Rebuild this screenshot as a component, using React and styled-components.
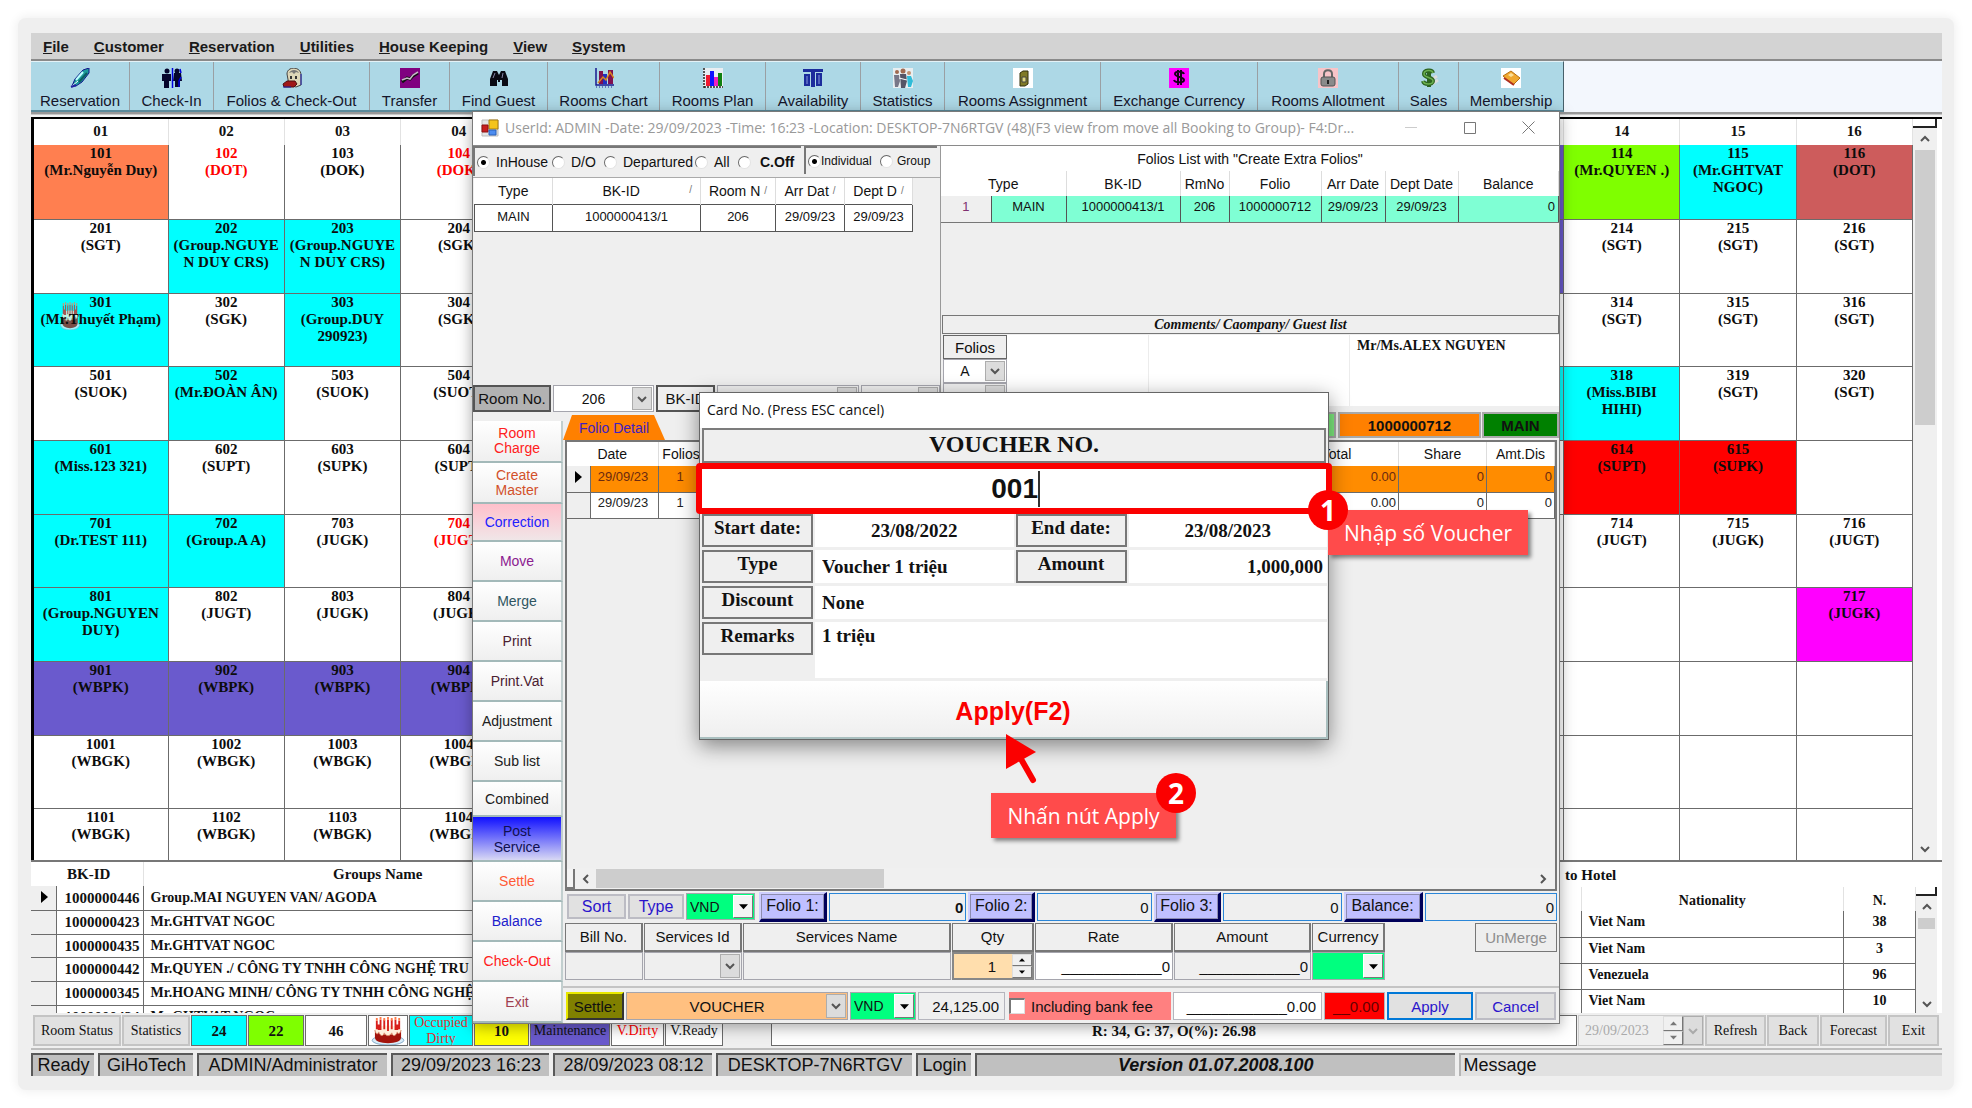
import React from "react";
import styled, { createGlobalStyle, css } from "styled-components";

const SANS = '"Liberation Sans", Arial, sans-serif';
const SERIF = '"Liberation Serif", "Times New Roman", serif';
const UI = '"Open Sans", "Noto Sans", sans-serif';
const LINE = "#6b6b6b";
const FACE = "#efefef";

const GlobalStyle = createGlobalStyle`
  *, *::before, *::after { box-sizing: border-box; }
  body { margin: 0; background: #fff; font-family: ${SANS}; color: #111; }
  button, input, select { font: inherit; color: inherit; margin: 0; border-radius: 0; }
  table { border-collapse: collapse; border-spacing: 0; }
`;

/* ---------- page shell ---------- */

const Page = styled.div`
  padding: 18px;
  min-width: 1400px;
`;

const Frame = styled.div`
  padding: 15px 12px 14px 13px;
  background: ${FACE};
  border-radius: 8px;
  box-shadow: 0 0 10px 2px #f1f1f1;
`;

const Desk = styled.div`
  position: relative;
  overflow: hidden;
`;

/* ---------- menu and toolbar ---------- */

const MenuBar = styled.nav`
  display: flex;
  gap: 25px;
  align-items: center;
  height: 28px;
  padding-left: 12px;
  background: #d3d3d3;
  border-bottom: 2px solid #8a8a8a;
  font-weight: bold;
  font-size: 15px;
`;

const MenuLink = styled.a`
  color: #1a1a1a;
  text-decoration: none;
`;

const ToolStrip = styled.div`
  display: flex;
  height: 51px;
  background: #f3f7fd;
`;

const Tools = styled.div`
  display: flex;
  border-top: 1px solid #e4f2f7;
  border-bottom: 2px solid #5b8b9c;
  border-right: 1px solid #47606a;
`;

const Tool = styled.button`
  display: flex;
  flex-direction: column;
  align-items: center;
  gap: 3px;
  width: ${(p) => p.$w}px;
  padding: 6px 0 0;
  border: 0;
  border-right: 1px solid #9a9fa3;
  background: #add8e6;
  color: #15152a;
  font-size: 15px;
  line-height: 20px;
  white-space: nowrap;
  svg { display: block; width: 20px; height: 20px; flex: none; }
  &:last-child { border-right: 0; }
`;

const Rail = styled.div`
  height: 5px;
  background: #c9c9c9;
  border-bottom: 2px solid #f4f4f4;
  border-top: 2px solid #999;
`;

/* ---------- room plan ---------- */

const Plan = styled.div`
  display: flex;
  padding-right: 5px;
  border-top: 2px solid #000;
  border-left: 3px solid #000;
  background: #fff;
`;

const PlanTable = styled.table`
  flex: 1;
  min-width: 0;
  width: 100%;
  table-layout: fixed;
  font: bold 15px/17px ${SERIF};
`;

const PlanHead = styled.th`
  height: 26px;
  padding: 0 0 1px;
  border-right: 1px solid #e2e2e2;
`;

const PlanRow = styled.tr`
  height: 74px;
  &:nth-child(3n) { height: 73px; }
  &:last-child { height: 52px; }
`;

const Room = styled.td`
  padding: 0;
  vertical-align: top;
  text-align: center;
  white-space: pre;
  overflow: hidden;
  border-right: 1px solid ${LINE};
  border-bottom: 1px solid ${LINE};
  background: ${(p) => p.$bg || "#fff"};
  color: ${(p) => p.$fg || "#0c0c0c"};
  tr:last-child > & { border-bottom: 0; }
`;

const RoomBox = styled.div`
  position: relative;
  z-index: 0;
  svg { position: absolute; z-index: -1; left: 26px; top: 8px; width: 20px; height: 28px; opacity: 0.75; }
`;

const VScroll = styled.div`
  display: flex;
  flex-direction: column;
  flex: none;
  width: ${(p) => p.$w}px;
  background: #f0f0f0;
`;

const SplitGrip = styled.div`
  height: 9px;
  background: #fff;
  border-right: 2px solid #222;
  border-bottom: 2px solid #222;
`;

const ArrowButton = styled.button`
  display: flex;
  align-items: center;
  justify-content: center;
  flex: none;
  width: ${(p) => (p.$w ? p.$w + "px" : "auto")};
  height: ${(p) => p.$h || 20}px;
  padding: 0;
  border: 0;
  background: transparent;
`;

const Thumb = styled.div`
  height: ${(p) => p.$size}px;
  margin: 0 2px auto;
  background: #cdcdcd;
`;

/* ---------- lists under the plan ---------- */

const Lists = styled.div`
  display: flex;
  justify-content: space-between;
  height: 153px;
  overflow: hidden;
  border-top: 2px solid #777;
  background: #fff;
  font: bold 15px/17px ${SERIF};
`;

const GroupTable = styled.table`
  width: 578px;
  height: max-content;
  table-layout: fixed;
  th { height: 24px; padding: 0; border-right: 1px solid #e2e2e2; }
  thead th { padding: 0 0 0 4px; }
  tbody tr { height: 24px; }
  tbody tr:nth-child(3n) { height: 23px; }
  td {
    padding: 0 3px;
    overflow: hidden;
    white-space: nowrap;
    line-height: 16px;
    border-right: 1px solid ${LINE};
    border-bottom: 1px solid ${LINE};
  }
  td:first-child { background: ${FACE}; padding: 0 10px; }
  td:last-child { padding-left: 7px; font-size: 14px; }
`;

const Hotel = styled.section`
  flex: none;
  width: 382px;
  padding-right: 5px;
`;

const HotelTitle = styled.div`
  height: 25px;
  padding: 5px 0 0 5px;
`;

const HotelBody = styled.div`
  display: flex;
`;

const HotelTable = styled.table`
  flex: 1;
  table-layout: fixed;
  font-size: 14px;
  th { height: 24px; padding: 2px 0 0; border-right: 1px solid #e2e2e2; }
  tbody tr { height: 26px; }
  td {
    padding: 0 0 4px 7px;
    border-right: 1px solid ${LINE};
    border-bottom: 1px solid ${LINE};
  }
  td:last-child { text-align: center; padding-left: 0; }
`;

/* ---------- legend and status bar ---------- */

const Legend = styled.div`
  display: flex;
  align-items: stretch;
  gap: 1px;
  height: 33px;
  padding: 2px 3px 0 2px;
  background: ${FACE};
  font: 14px/16px ${SERIF};
`;

const FlatButton = styled.button`
  width: ${(p) => p.$w}px;
  padding: 0;
  border: 2px solid #c4c4c4;
  background: #e1e1e1;
`;

const Key = styled.div`
  display: flex;
  align-items: center;
  justify-content: center;
  width: ${(p) => p.$w}px;
  overflow: hidden;
  text-align: center;
  background: ${(p) => p.$bg || "#fff"};
  color: ${(p) => p.$fg || "#111"};
  font-weight: ${(p) => (p.$bold ? "bold" : "normal")};
  font-size: ${(p) => (p.$bold ? 15 : 14)}px;
  border: 1px solid ${LINE};
`;

const Ratio = styled.div`
  display: flex;
  align-items: center;
  justify-content: center;
  flex: 1;
  margin-left: 47px;
  background: #fff;
  border: 1px solid ${LINE};
  font-weight: bold;
  font-size: 15px;
`;

const DateBox = styled.div`
  display: flex;
  width: 126px;
  border: 1px solid #ccc;
  input { flex: 1; min-width: 0; border: 0; padding: 0 0 0 6px; background: transparent; color: #aaa; }
`;

const StatusBar = styled.footer`
  display: flex;
  gap: 4px;
  margin-top: 2px;
  padding-top: 3px;
  border-top: 2px solid #bdbdbd;
  background: ${FACE};
  font-size: 18px;
  line-height: 21px;
  white-space: nowrap;
`;

const StatusCell = styled.div`
  width: ${(p) => p.$w}px;
  flex: ${(p) => (p.$grow ? `${p.$grow} 1 0` : "none")};
  text-align: ${(p) => (p.$left ? "left" : "center")};
  padding-left: ${(p) => (p.$left ? 3 : 0)}px;
  background: ${(p) => (p.$left ? "#e1e1e1" : "#c0c0c0")};
  border-top: 2px solid ${(p) => (p.$left ? "#b5b5b5" : "#5a5a5a")};
  border-left: 2px solid ${(p) => (p.$left ? "#b5b5b5" : "#5a5a5a")};
  font-weight: ${(p) => (p.$version ? "bold" : "normal")};
  font-style: ${(p) => (p.$version ? "italic" : "normal")};
`;

/* ---------- folio window ---------- */

const FolioWindow = styled.section`
  position: absolute;
  left: 441px;
  right: 382px;
  top: 78px;
  background: ${FACE};
  border: 1px solid #7a7a7a;
  box-shadow: 0 3px 14px rgba(0, 0, 0, 0.35);
`;

const TitleBar = styled.header`
  display: flex;
  align-items: center;
  height: 34px;
  padding: 0 1px 2px 8px;
  background: #fff;
  border-bottom: 1px solid #8a8a8a;
  color: #999;
  font: 14px/20px ${UI};
  white-space: nowrap;
  svg { flex: none; }
`;

const TitleText = styled.div`
  flex: 1;
  min-width: 0;
  overflow: hidden;
  padding-left: 6px;
`;

const WindowButton = styled.button`
  display: flex;
  align-items: center;
  justify-content: center;
  width: 59px;
  height: 28px;
  padding: 0;
  border: 0;
  background: transparent;
`;

const Upper = styled.div`
  display: flex;
  height: 266px;
`;

const BookingPane = styled.div`
  display: flex;
  flex-direction: column;
  width: 467px;
  font-size: 14px;
`;

const Filters = styled.div`
  display: flex;
  gap: 3px;
  height: 32px;
  border-bottom: 1px solid #aaa;
`;

const FilterGroup = styled.fieldset`
  display: flex;
  align-items: center;
  width: ${(p) => p.$w}px;
  height: ${(p) => p.$h}px;
  margin: 0;
  padding: 0 0 0 2px;
  min-width: 0;
  border: 0;
  border-top: 2px solid #777;
  border-left: 2px solid #777;
  font-size: ${(p) => p.$size}px;
`;

const RadioLabel = styled.label`
  display: flex;
  align-items: center;
  gap: ${(p) => p.$gap}px;
  width: ${(p) => p.$w}px;
  white-space: nowrap;
  font-weight: ${(p) => (p.$bold ? "bold" : "normal")};
  input {
    appearance: none;
    flex: none;
    width: 13px;
    height: 13px;
    background: #fff;
    border: 1px solid #e3e3e3;
    border-top-color: #666;
    border-left-color: #666;
    border-radius: 50%;
  }
  input:checked { background: radial-gradient(circle, #000 2px, #fff 3px); }
`;

const BookingTable = styled.table`
  width: 439px;
  table-layout: fixed;
  margin-left: 1px;
  font-size: 13px;
  text-align: center;
  background: #fff;
  th { height: 26px; padding: 0; font-weight: normal; font-size: 14px; border-right: 1px solid #ddd; white-space: nowrap; }
  td { height: 27px; padding: 0 0 2px; border: 1px solid #555; white-space: nowrap; }
`;

const SortMark = styled.span`
  float: ${(p) => (p.$edge ? "right" : "none")};
  margin: ${(p) => (p.$edge ? "1px 8px 0 0" : "0 0 0 4px")};
  color: #777;
  font-size: 10px;
  vertical-align: 2px;
`;

const RoomLine = styled.div`
  display: flex;
  gap: 2px;
  height: 27px;
  margin-top: auto;
`;

const RoomButton = styled.button`
  width: ${(p) => p.$w}px;
  padding: 0;
  border: 2px solid #555;
  background: ${(p) => p.$bg};
  font-size: 15px;
  white-space: nowrap;
`;

const ComboBox = styled.span`
  display: flex;
  align-items: stretch;
  width: ${(p) => (p.$w ? p.$w + "px" : "auto")};
  height: ${(p) => (p.$h ? p.$h + "px" : "auto")};
  flex: ${(p) => (p.$w ? "none" : "1")};
  padding: 1px;
  background: ${(p) => p.$bg || "#fff"};
  border: 1px solid #a5a5ad;
  select {
    appearance: none;
    flex: 1;
    min-width: 0;
    padding: 0 2px;
    border: 0;
    outline: 0;
    background: transparent;
    font-size: ${(p) => (p.$left ? "14px" : "inherit")};
    text-align: ${(p) => (p.$left ? "left" : "center")};
    text-align-last: ${(p) => (p.$left ? "left" : "center")};
  }
`;

const ComboArrow = styled.span`
  display: flex;
  align-items: center;
  justify-content: center;
  flex: none;
  width: 20px;
  background: ${(p) => (p.$classic ? "#f4f4f4" : "#dcdcdc")};
  border: 1px solid ${(p) => (p.$classic ? "#fff" : "#adadad")};
  ${(p) => p.$classic && css`border-right-color: #777; border-bottom-color: #777;`}
`;

const FolioPane = styled.div`
  flex: 1;
  min-width: 0;
  display: flex;
  flex-direction: column;
  border-left: 1px solid #999;
  font-size: 14px;
`;

const ExtraCaption = styled.div`
  height: 25px;
  background: #fff;
  text-align: center;
  line-height: 26px;
`;

const ExtraTable = styled.table`
  width: 100%;
  table-layout: fixed;
  font-size: 13px;
  text-align: center;
  th { height: 25px; padding: 0; font-weight: normal; font-size: 14px; background: #fff; border-right: 1px solid #ddd; white-space: nowrap; }
  td { height: 26px; padding: 0 0 4px; background: #7fffd4; border-right: 1px solid #555; border-bottom: 1px solid #777; white-space: nowrap; }
  td:first-child { background: ${FACE}; color: #803070; }
  td:last-child { text-align: right; padding-right: 3px; }
`;

const CommentsBar = styled.div`
  height: 19px;
  margin: auto 0 0 1px;
  border: 1px solid #777;
  text-align: center;
  font: italic bold 14px/17px ${SERIF};
`;

const CommentsArea = styled.div`
  display: flex;
  height: 78px;
  padding: 1px 0 0 2px;
`;

const FolioPick = styled.div`
  display: flex;
  flex-direction: column;
  width: 64px;
`;

const FolioButton = styled.button`
  height: 24px;
  padding: 0;
  border: 1px solid #666;
  background: ${FACE};
  font-size: 15px;
`;

const GuestList = styled.div`
  display: grid;
  grid-template-columns: 141px 201px 1fr;
  flex: 1;
  height: 71px;
  background: #fff;
  font: bold 14px/17px ${SERIF};
  div { padding: 2px 7px; border-left: 1px solid #ececec; white-space: nowrap; }
  div:first-child { border-left: 0; }
`;

const Lower = styled.div`
  display: flex;
`;

const SideBar = styled.div`
  display: flex;
  flex-direction: column;
  width: 90px;
  padding-top: 9px;
`;

const SideButton = styled.button`
  height: ${(p) => p.$h}px;
  padding: 0 8px;
  border: 0;
  border-bottom: 2px solid #a3b9b9;
  border-right: 2px solid #c2cfcf;
  background: ${(p) => p.$bg || "linear-gradient(#fff, #efefef)"};
  color: ${(p) => p.$fg || "#202020"};
  font-size: 14px;
  line-height: ${(p) => p.$lh || 16}px;
`;

const Work = styled.div`
  display: flex;
  flex-direction: column;
  flex: 1;
  min-width: 0;
`;

const TabLine = styled.div`
  display: flex;
  height: 28px;
  gap: 1px;
`;

const Tab = styled.button`
  width: 102px;
  margin: 3px auto 0 0;
  padding: 0;
  border: 0;
  background: #ff8000;
  clip-path: polygon(9px 0, 91px 0, 100% 100%, 0 100%);
  color: #4020c0;
  font-size: 14px;
`;

const FolioTag = styled.div`
  width: ${(p) => p.$w}px;
  height: 26px;
  border: 2px solid #a9a9a9;
  background: ${(p) => p.$bg};
  text-align: center;
  font-weight: bold;
  font-size: 15px;
  line-height: 24px;
`;

const LedgerBox = styled.div`
  display: flex;
  flex-direction: column;
  flex: 1;
  margin: 0 2px 0 2px;
  border: 2px solid #777;
  overflow: hidden;
`;

const Ledger = styled.table`
  width: 100%;
  table-layout: fixed;
  font-size: 13px;
  th { height: 24px; padding: 0; background: #fff; font-weight: normal; font-size: 14px; border-right: 1px solid #ddd; }
  td { height: 26px; padding: 0 2px 5px 0; text-align: right; border-right: 1px solid ${LINE}; border-bottom: 1px solid ${LINE}; }
  td:nth-child(2), td:nth-child(3) { text-align: center; }
  td:first-child { background: ${FACE}; text-align: center; padding: 0; }
`;

const LedgerRow = styled.tr`
  background: ${(p) => (p.$active ? "#ff8c00" : "#fff")};
  color: ${(p) => (p.$active ? "#6b2a10" : "#222")};
`;

const HScroll = styled.div`
  display: flex;
  align-items: center;
  height: 21px;
  margin-top: auto;
  background: #f0f0f0;
`;

const HGrip = styled.div`
  width: 8px;
  height: 20px;
  background: #f4f4f4;
  border-right: 2px solid #777;
  border-bottom: 2px solid #777;
`;

const HThumb = styled.div`
  width: 288px;
  height: 19px;
  margin-right: auto;
  background: #cdcdcd;
`;

const SumLine = styled.div`
  display: flex;
  align-items: center;
  gap: 2px;
  height: 31px;
  padding: 0 2px 0 4px;
  font-size: 16px;
`;

const SmallButton = styled.button`
  width: ${(p) => p.$w}px;
  height: ${(p) => p.$h || 25}px;
  padding: 0;
  border: ${(p) => (p.$primary ? "2px solid #0078d7" : "2px solid #bcbcc4")};
  background: #e1e1e1;
  color: #2a14cc;
  font-size: ${(p) => p.$size || 16}px;
`;

const SumLabel = styled.label`
  display: flex;
  align-items: center;
  justify-content: center;
  flex: none;
  width: ${(p) => p.$w}px;
  height: 30px;
  border: 2px solid #cfcfff;
  border-right: 3px solid #00005a;
  border-bottom: 3px solid #00005a;
  background: #c0c0ff;
  box-shadow: inset 0 0 0 1px #8d8db0;
`;

const SumInput = styled.input`
  flex: ${(p) => p.$grow} 1 0;
  min-width: 0;
  height: 28px;
  padding: 2px 2px 0 0;
  border: 1px solid #2a86d8;
  background: ${FACE};
  text-align: right;
  font-weight: ${(p) => (p.$bold ? "bold" : "normal")};
  font-size: 15px;
`;

const EntryGrid = styled.div`
  display: grid;
  grid-template-columns: 78px 98px 208px 82px 138px 137px 73px 1fr 82px;
  grid-template-rows: 29px 28px;
  column-gap: 1px;
  padding: 1px 2px 0 2px;
  font-size: 15px;
`;

const EntryHead = styled.div`
  border: 2px solid #777;
  border-left-width: 1px;
  border-top-width: 1px;
  text-align: center;
  line-height: 26px;
  white-space: nowrap;
`;

const EntryInput = styled.input`
  width: 100%;
  min-width: 0;
  padding: 0 2px 0 0;
  border: 1px solid #a5a5ad;
  background: ${(p) => p.$bg || "transparent"};
  text-align: right;
`;

const QtyBox = styled.div`
  display: flex;
  border: 2px solid #888;
  background: #ffdead;
  input { flex: 1; min-width: 0; padding: 0 16px 0 0; border: 0; background: transparent; text-align: right; }
`;

const Spin = styled.div`
  display: flex;
  flex-direction: column;
  width: 20px;
  background: #f0f0f0;
`;

const SpinButton = styled.button`
  display: flex;
  align-items: center;
  justify-content: center;
  flex: 1;
  padding: 0;
  border: 1px solid #ddd;
  border-bottom-color: #777;
  border-right-color: #777;
  background: #f0f0f0;
`;

const UnMerge = styled.button`
  grid-column: 9;
  grid-row: 1;
  padding: 0;
  border: 1px solid #777;
  background: #eee;
  color: #8d8d8d;
`;

const SettleLine = styled.div`
  display: flex;
  align-items: stretch;
  gap: 2px;
  height: 37px;
  margin-top: 6px;
  padding: 4px 3px 3px 3px;
  border-top: 2px solid #c4c4c4;
  font-size: 15px;
`;

const SettleButton = styled.button`
  width: 58px;
  padding: 0;
  border: 2px solid #333;
  border-top-color: #e8e800;
  border-left-color: #e8e800;
  background: #808000;
`;

const SettleInput = styled.input`
  width: ${(p) => p.$w}px;
  min-width: 0;
  padding: 0 5px 0 0;
  border: 1px solid #b5b5bd;
  background: ${(p) => p.$bg || "#fff"};
  color: ${(p) => p.$fg || "#111"};
  text-align: right;
`;

const FeeLabel = styled.label`
  display: flex;
  align-items: center;
  gap: 6px;
  width: 162px;
  background: #ff8080;
  white-space: nowrap;
  input {
    appearance: none;
    width: 16px;
    height: 16px;
    background: #fff;
    border: 1px solid #ddd;
    border-top: 2px solid #777;
    border-left: 2px solid #777;
  }
`;

/* ---------- voucher dialog ---------- */

const Dialog = styled.section`
  position: absolute;
  left: 668px;
  top: 359px;
  width: 630px;
  background: ${FACE};
  border: 1px solid #666;
  box-shadow: 0 6px 20px rgba(0, 0, 0, 0.45);
  font: bold 19px/26px ${SERIF};
`;

const DialogTitle = styled.header`
  height: 35px;
  padding: 0 7px;
  background: #fff;
  font: 14px/33px ${UI};
`;

const DialogHeading = styled.label`
  display: block;
  height: 35px;
  margin: 0 2px;
  border: 2px solid #7c7c7c;
  text-align: center;
  font-size: 24px;
  line-height: 28px;
`;

const CodeField = styled.div`
  display: flex;
  align-items: center;
  justify-content: center;
  height: 51px;
  margin: 0 -4px;
  border: 6px solid #fb0000;
  border-radius: 4px;
  background: #fff;
  input {
    width: 50px;
    padding: 0;
    border: 0;
    outline: 0;
    background: transparent;
    text-align: right;
    font: bold 28px/34px ${SANS};
  }
`;

const Caret = styled.span`
  width: 2px;
  height: 36px;
  background: #333;
`;

const FieldRow = styled.div`
  display: flex;
  gap: 2px;
  height: ${(p) => p.$h || 33}px;
  margin: 0 1px 3px 2px;
`;

const FieldLabel = styled.label`
  flex: none;
  width: 111px;
  height: 33px;
  border: 2px solid #777;
  text-align: center;
  line-height: 24px;
`;

const FieldInput = styled.input`
  flex: 1;
  min-width: 0;
  height: ${(p) => p.$h || 33}px;
  padding: ${(p) => p.$pad || "0 4px 0 7px"};
  border: 0;
  background: #fff;
  text-align: ${(p) => p.$align || "left"};
`;

const ApplyButton = styled.button`
  display: block;
  width: 100%;
  height: 58px;
  padding: 4px 0 0;
  border: 0;
  border-right: 2px solid #a9bfbf;
  border-bottom: 2px solid #a9bfbf;
  background: linear-gradient(#fff, #efefef);
  color: #fb0000;
  font: bold 25px/30px ${SANS};
`;

/* ---------- tutorial callouts ---------- */

const Callout = styled.div`
  position: absolute;
  left: ${(p) => p.$x}px;
  top: ${(p) => p.$y}px;
  width: ${(p) => p.$w}px;
  height: 45px;
  background: #ff4b4b;
  box-shadow: 3px 3px 4px rgba(0, 0, 0, 0.45);
  color: #fff;
  text-align: center;
  font: 21px/47px ${UI};
  white-space: nowrap;
`;

const Badge = styled.div`
  position: absolute;
  left: ${(p) => p.$x}px;
  top: ${(p) => p.$y}px;
  width: 40px;
  height: 40px;
  border-radius: 50%;
  background: #fb0000;
  color: #fff;
  text-align: center;
  font: bold 28px/40px ${UI};
`;

const Pointer = styled.svg`
  position: absolute;
  left: 974px;
  top: 700px;
  width: 34px;
  height: 54px;
`;

/* ---------- drawings ---------- */

const Chevron = ({ dir = "down", size = 12, color = "#555" }) => {
  const turn = { down: 0, left: 90, up: 180, right: 270 }[dir];
  return (
    <svg width={size} height={size} viewBox="0 0 12 12" aria-hidden="true">
      <path d="M2 4l4 4 4-4" fill="none" stroke={color} strokeWidth="2" transform={`rotate(${turn} 6 6)`} />
    </svg>
  );
};

const Triangle = ({ dir = "down", w = 10, color = "#000" }) => {
  const turn = { down: 0, up: 180, right: 270 }[dir];
  return (
    <svg width={w} height={w} viewBox="0 0 10 10" aria-hidden="true">
      <path d="M0 2.5h10l-5 5.5z" fill={color} transform={`rotate(${turn} 5 5)`} />
    </svg>
  );
};

const Marker = () => (
  <svg width="7" height="12" viewBox="0 0 7 12" aria-hidden="true">
    <path d="M0 0l7 6-7 6z" fill="#000" />
  </svg>
);

const Cake = (props) => (
  <svg viewBox="0 0 36 30" aria-hidden="true" {...props}>
    <ellipse cx="18" cy="25" rx="17" ry="5" fill="#d8ecf8" stroke="#7fa8c8" />
    <path d="M4 14v8c0 4 6 6 14 6s14-2 14-6v-8z" fill="#a3140c" />
    <ellipse cx="18" cy="14" rx="14" ry="5" fill="#fff0dc" />
    <path d="M4 14c1 5 3 5 4 2 2 5 5 5 6 1 2 4 6 4 8 0 1 4 4 4 6-1 1 3 3 2 4-2" fill="#fff0dc" stroke="#d98a6a" />
    <path d="M6 4v9M10 3v11M14 3v10M18 3v12M22 3v10M26 3v11M30 4v9M8 8v6M28 8v6" stroke="#d8201c" strokeWidth="2" />
    <path d="M6 1v3M10 0v3M14 1v3M18 0v3M22 1v3M26 0v3M30 1v3" stroke="#ff7b4a" strokeWidth="2" />
  </svg>
);

const icons = {
  pen: (
    <g>
      <path d="M2 18l3-7 8-9 6-2v5l-7 9-6 4z" fill="#1b9a9a" stroke="#14148c" />
      <path d="M6 12l7-8" stroke="#bff" strokeWidth="2" />
      <path d="M9 14l8-9" stroke="#0c5c60" strokeWidth="2" />
      <path d="M2 18l6-5" stroke="#fff" />
      <path d="M1 19l5-2" stroke="#2222a0" strokeWidth="2" />
    </g>
  ),
  people: (
    <g>
      <g fill="#05052c">
        <circle cx="5" cy="3" r="2.5" />
        <path d="M0 6h9v7H7v7H2v-7H0z" />
        <circle cx="15" cy="3" r="2.5" />
        <path d="M12 5h7l1 8h-2v6h-5v-6h-2z" />
      </g>
      <path d="M10.500 0v20" stroke="#0000e0" strokeWidth="1.500" />
      <path d="M18 1l1 4M19 9l-2 4v6" fill="none" stroke="#0000e0" strokeWidth="1.500" />
    </g>
  ),
  clerk: (
    <g>
      <path d="M5 6c0-8 14-8 14 1v10l-5 2-7-2z" fill="#ddd6b8" stroke="#444" />
      <path d="M7 5c2-4 8-4 10 0l-3-1-2 2-2-2z" fill="#777" />
      <path d="M8 8h2v3H8zM13 8h2v3h-2z" fill="#333" />
      <path d="M1 16l4-3h8l2 3-3 3H2z" fill="#a01818" stroke="#501010" />
      <path d="M1 19h8M19 6v11" stroke="#2222b0" />
    </g>
  ),
  transfer: (
    <g>
      <path d="M0 0h20v20H0z" fill="#800080" />
      <path d="M2 14l5-4 3 1 3-3 5-3" fill="none" stroke="#111" strokeWidth="3" />
      <path d="M2 12l5-2 3 1 3-4 5-3" fill="none" stroke="#c8b8c8" strokeWidth="1.500" />
    </g>
  ),
  binoculars: (
    <g fill="#0a0a14">
      <path d="M4 3h4l2 4 2-4h4l3 8v7h-6v-6h-2v2H9v-2H8v6H1v-7z" />
      <path d="M4 10l2-5M13 10l1-5" stroke="#88a" />
    </g>
  ),
  chart: (
    <g>
      <path d="M2 0v17h18" fill="none" stroke="#1a1a90" strokeWidth="1.500" />
      <path d="M5 3h4v13H5zM14 2h5v14h-5z" fill="#801050" />
      <path d="M9 6h4v10H9z" fill="#2030c0" />
      <path d="M4 15l5-6 3 3 4-8 4 6" fill="none" stroke="#d88820" strokeWidth="1.500" />
      <path d="M2 19h18" stroke="#1a1a90" strokeDasharray="1 2" />
    </g>
  ),
  bars: (
    <g>
      <path d="M0 0h20v20H0z" fill="#e9eef2" />
      <path d="M1 0v20M1 19h19" stroke="#222" strokeDasharray="2 1" strokeWidth="1.500" />
      <path d="M3 7h4v11H3z" fill="#f01830" />
      <path d="M7 3h4v15H7z" fill="#1010ff" />
      <path d="M11 9h4v9h-4z" fill="#f020c0" />
      <path d="M15 5h4v13h-4z" fill="#108010" />
    </g>
  ),
  columns: (
    <g>
      <path d="M0 1h20v3H0z" fill="#1c2c9c" />
      <path d="M1 6h6v12H1zM8 4h4v15H8zM13 5h6v13h-6z" fill="#1c2c9c" />
      <path d="M4 8v8M16 7v9" stroke="#8a9be0" />
    </g>
  ),
  team: (
    <g>
      <path d="M0 0h20v20H0z" fill="#e8eef0" />
      <circle cx="4" cy="4" r="2" fill="#a06a50" />
      <circle cx="10" cy="3" r="2.500" fill="#a06a50" />
      <circle cx="16" cy="5" r="2" fill="#c09070" />
      <path d="M1 7h5l1 6-2 6H2z" fill="#778" />
      <path d="M7 6h6l1 7-2 7H8z" fill="#556" />
      <path d="M14 8h4l2 5-2 6h-3z" fill="#30bcd8" />
      <path d="M6 10l8 2" stroke="#fff" />
    </g>
  ),
  lockbox: (
    <g>
      <path d="M0 0h20v20H0z" fill="#fff" />
      <path d="M7 5l3-2h5v13l-3 2H7z" fill="#807a28" stroke="#33300c" />
      <path d="M9 9h4v5H9z" fill="#e0d880" stroke="#444" />
    </g>
  ),
  dollarBox: (
    <g>
      <path d="M0 0h20v20H0z" fill="#ff00ff" />
      <path d="M15 6c-1-3-9-3-9 0s9 3 9 6-9 3-10 0M9 2v15M12 2v15" fill="none" stroke="#1a001a" strokeWidth="2" />
    </g>
  ),
  padlock: (
    <g>
      <path d="M0 0h20v20H0z" fill="#f8c4c8" />
      <path d="M6 10V6c0-5 8-5 8 0v4" fill="none" stroke="#666" strokeWidth="2" />
      <rect x="3" y="9" width="14" height="9" rx="2" fill="#8a8a8a" stroke="#555" />
      <path d="M10 12v4" stroke="#222" strokeWidth="2" />
    </g>
  ),
  dollar: (
    <g>
      <path d="M12 12l6-4M13 16l6-4" stroke="#ddd" strokeWidth="3" />
      <path d="M14 5c-1-4-9-3-9 1s9 3 9 7-9 4-10 0M10 1v18" fill="none" stroke="#2c6420" strokeWidth="4" />
      <path d="M14 5c-1-4-9-3-9 1s9 3 9 7-9 4-10 0" fill="none" stroke="#6cb050" strokeWidth="1.500" />
    </g>
  ),
  card: (
    <g>
      <path d="M0 0h20v20H0z" fill="#fff" />
      <path d="M2 8l8-5 9 7-7 7z" fill="#f0a830" stroke="#b87010" />
      <path d="M3 10l10 7" stroke="#b03020" strokeWidth="2" />
      <path d="M7 7l3-2 3 2-3 2z" fill="#fbe09a" />
    </g>
  ),
};

/* ---------- data ---------- */

const menus = ["File", "Customer", "Reservation", "Utilities", "House Keeping", "View", "System"];

const tools = [
  ["Reservation", "pen", 99],
  ["Check-In", "people", 84],
  ["Folios & Check-Out", "clerk", 156],
  ["Transfer", "transfer", 80],
  ["Find Guest", "binoculars", 98],
  ["Rooms Chart", "chart", 112],
  ["Rooms Plan", "bars", 106],
  ["Availability", "columns", 95],
  ["Statistics", "team", 84],
  ["Rooms Assignment", "lockbox", 156],
  ["Exchange Currency", "dollarBox", 157],
  ["Rooms Allotment", "padlock", 141],
  ["Sales", "dollar", 60],
  ["Membership", "card", 104],
];

const C = "#00ffff";
const P = "#6a5acd";
const R = "#ff0000";
const E = { t: "" };

const plan = [
  [
    { t: "101\n(Mr.Nguyễn Duy)", bg: "#ff7f50" },
    { t: "102\n(DOT)", fg: R },
    { t: "103\n(DOK)" },
    { t: "104\n(DOK)", fg: R },
    { t: "", bg: P },
    { t: "114\n(Mr.QUYEN .)", bg: "#7fff00" },
    { t: "115\n(Mr.GHTVAT\nNGOC)", bg: C },
    { t: "116\n(DOT)", bg: "#cd5c5c" },
  ],
  [
    { t: "201\n(SGT)" },
    { t: "202\n(Group.NGUYE\nN DUY CRS)", bg: C },
    { t: "203\n(Group.NGUYE\nN DUY CRS)", bg: C },
    { t: "204\n(SGK)" },
    { t: "", bg: P },
    { t: "214\n(SGT)" },
    { t: "215\n(SGT)" },
    { t: "216\n(SGT)" },
  ],
  [
    { t: "301\n(Mr.Thuyết Phạm)", bg: C, cake: true },
    { t: "302\n(SGK)" },
    { t: "303\n(Group.DUY\n290923)", bg: C },
    { t: "304\n(SGK)" },
    E,
    { t: "314\n(SGT)" },
    { t: "315\n(SGT)" },
    { t: "316\n(SGT)" },
  ],
  [
    { t: "501\n(SUOK)" },
    { t: "502\n(Mr.ĐOÀN ÂN)", bg: C },
    { t: "503\n(SUOK)" },
    { t: "504\n(SUOT)" },
    { t: "", bg: C },
    { t: "318\n(Miss.BIBI\nHIHI)", bg: C },
    { t: "319\n(SGT)" },
    { t: "320\n(SGT)" },
  ],
  [
    { t: "601\n(Miss.123 321)", bg: C },
    { t: "602\n(SUPT)" },
    { t: "603\n(SUPK)" },
    { t: "604\n(SUPT)" },
    E,
    { t: "614\n(SUPT)", bg: R },
    { t: "615\n(SUPK)", bg: R },
    E,
  ],
  [
    { t: "701\n(Dr.TEST 111)", bg: C },
    { t: "702\n(Group.A A)", bg: C },
    { t: "703\n(JUGK)" },
    { t: "704\n(JUGT)", fg: R },
    E,
    { t: "714\n(JUGT)" },
    { t: "715\n(JUGK)" },
    { t: "716\n(JUGT)" },
  ],
  [
    { t: "801\n(Group.NGUYEN\nDUY)", bg: C },
    { t: "802\n(JUGT)" },
    { t: "803\n(JUGK)" },
    { t: "804\n(JUGK)" },
    E,
    E,
    E,
    { t: "717\n(JUGK)", bg: "#ff00ff" },
  ],
  [
    { t: "901\n(WBPK)", bg: P },
    { t: "902\n(WBPK)", bg: P },
    { t: "903\n(WBPK)", bg: P },
    { t: "904\n(WBPK)", bg: P },
    E,
    E,
    E,
    E,
  ],
  [{ t: "1001\n(WBGK)" }, { t: "1002\n(WBGK)" }, { t: "1003\n(WBGK)" }, { t: "1004\n(WBGK)" }, E, E, E, E],
  [{ t: "1101\n(WBGK)" }, { t: "1102\n(WBGK)" }, { t: "1103\n(WBGK)" }, { t: "1104\n(WBGK)" }, E, E, E, E],
];

const groups = [
  ["1000000446", "Group.MAI NGUYEN VAN/ AGODA"],
  ["1000000423", "Mr.GHTVAT NGOC"],
  ["1000000435", "Mr.GHTVAT NGOC"],
  ["1000000442", "Mr.QUYEN ./ CÔNG TY TNHH CÔNG NGHỆ TRU"],
  ["1000000345", "Mr.HOANG MINH/ CÔNG TY TNHH CÔNG NGHỆ"],
  ["1000000424", "Mr.GHTVAT NGOC"],
];

const nations = [
  ["Viet Nam", 38],
  ["Viet Nam", 3],
  ["Venezuela", 96],
  ["Viet Nam", 10],
];

const sideButtons = [
  { t: "Room Charge", h: 42, fg: "#ff2020", lh: 15 },
  { t: "Create Master", h: 41, fg: "#d2502a", lh: 15 },
  { t: "Correction", h: 38, fg: "#2020ff", bg: "linear-gradient(#ffc0cb, #f0e6e8)" },
  { t: "Move", h: 40, fg: "#8b2090" },
  { t: "Merge", h: 40, fg: "#2f5560" },
  { t: "Print", h: 40, fg: "#4a2030" },
  { t: "Print.Vat", h: 40, fg: "#4a2030" },
  { t: "Adjustment", h: 40 },
  { t: "Sub list", h: 40 },
  { t: "Combined", h: 35 },
  { t: "Post Service", h: 45, fg: "#101050", bg: "linear-gradient(#1010ff, #d8d8f4)" },
  { t: "Settle", h: 40, fg: "#ff5a36" },
  { t: "Balance", h: 40, fg: "#2020cc" },
  { t: "Check-Out", h: 40, fg: "#ff2020" },
  { t: "Exit", h: 41, fg: "#a04050" },
];

const mask = "_".repeat(12);

/* ---------- parts ---------- */

function Combo({ label, value, w, h, bg, left, classic }) {
  return (
    <ComboBox $w={w} $h={h} $bg={bg} $left={left}>
      <select aria-label={label} defaultValue={value}>
        <option>{value}</option>
      </select>
      <ComboArrow $classic={classic}>{classic ? <Triangle w={9} /> : <Chevron />}</ComboArrow>
    </ComboBox>
  );
}

function Radio({ name, text, w, gap = 6, bold, checked }) {
  return (
    <RadioLabel $w={w} $gap={gap} $bold={bold}>
      <input type="radio" name={name} defaultChecked={checked} />
      {text}
    </RadioLabel>
  );
}

function RoomPlan() {
  return (
    <Plan>
      <PlanTable>
        <colgroup>
          <col style={{ width: 134 }} />
          {Array.from({ length: 15 }, (_, i) => (
            <col key={i} />
          ))}
        </colgroup>
        <thead>
          <tr>
            {["01", "02", "03", "04"].map((n) => (
              <PlanHead key={n}>{n}</PlanHead>
            ))}
            <PlanHead colSpan={9} />
            {["14", "15", "16"].map((n) => (
              <PlanHead key={n}>{n}</PlanHead>
            ))}
          </tr>
        </thead>
        <tbody>
          {plan.map((row, i) => (
            <PlanRow key={i}>
              {row.map((room, j) => (
                <Room key={j} colSpan={j === 4 ? 9 : 1} $bg={room.bg} $fg={room.fg}>
                  {room.cake ? (
                    <RoomBox>
                      <Cake preserveAspectRatio="none" />
                      {room.t}
                    </RoomBox>
                  ) : (
                    room.t
                  )}
                </Room>
              ))}
            </PlanRow>
          ))}
        </tbody>
      </PlanTable>
      <VScroll $w={24}>
        <SplitGrip />
        <ArrowButton $h={22} aria-label="Scroll up"><Chevron dir="up" /></ArrowButton>
        <Thumb $size={275} />
        <ArrowButton $h={22} aria-label="Scroll down"><Chevron /></ArrowButton>
      </VScroll>
    </Plan>
  );
}

function BottomLists() {
  return (
    <Lists>
      <GroupTable>
        <colgroup>
          <col style={{ width: 25 }} />
          <col style={{ width: 87 }} />
          <col />
        </colgroup>
        <thead>
          <tr>
            <th colSpan={2}>BK-ID</th>
            <th>Groups Name</th>
          </tr>
        </thead>
        <tbody>
          {groups.map(([id, name], i) => (
            <tr key={id}>
              <td>{i === 0 && <Marker />}</td>
              <td align="right">{id}</td>
              <td>{name}</td>
            </tr>
          ))}
        </tbody>
      </GroupTable>
      <Hotel>
        <HotelTitle>to Hotel</HotelTitle>
        <HotelBody>
          <HotelTable>
            <colgroup>
              <col style={{ width: 21 }} />
              <col />
              <col style={{ width: 72 }} />
            </colgroup>
            <thead>
              <tr>
                <th />
                <th>Nationality</th>
                <th>N.</th>
              </tr>
            </thead>
            <tbody>
              {nations.map(([name, n], i) => (
                <tr key={i}>
                  <td />
                  <td>{name}</td>
                  <td>{n}</td>
                </tr>
              ))}
            </tbody>
          </HotelTable>
          <VScroll $w={21}>
            <SplitGrip />
            <ArrowButton $h={22} aria-label="Scroll up"><Chevron dir="up" /></ArrowButton>
            <Thumb $size={11} />
            <ArrowButton $h={24} aria-label="Scroll down"><Chevron /></ArrowButton>
          </VScroll>
        </HotelBody>
      </Hotel>
    </Lists>
  );
}

function LegendBar() {
  return (
    <Legend>
      <FlatButton $w={88}>Room Status</FlatButton>
      <FlatButton $w={68}>Statistics</FlatButton>
      <Key $w={56} $bg={C} $bold>24</Key>
      <Key $w={56} $bg="#7fff00" $bold>22</Key>
      <Key $w={62} $bold>46</Key>
      <Key $w={40}><Cake width="36" height="28" /></Key>
      <Key $w={64} $bg={C} $fg="#e03030">Occupied Dirty</Key>
      <Key $w={55} $bg="#ffff00" $bold>10</Key>
      <Key $w={80} $bg={P}>Maintenance</Key>
      <Key $w={53} $fg={R}>V.Dirty</Key>
      <Key $w={58}>V.Ready</Key>
      <Ratio>R: 34, G: 37, O(%): 26.98</Ratio>
      <DateBox>
        <input aria-label="Date" defaultValue="29/09/2023" disabled />
        <Spin>
          <SpinButton aria-label="Next day"><Triangle dir="up" w={7} color="#777" /></SpinButton>
          <SpinButton aria-label="Previous day"><Triangle w={7} color="#777" /></SpinButton>
        </Spin>
        <ComboArrow><Chevron color="#aaa" /></ComboArrow>
      </DateBox>
      <FlatButton $w={61}>Refresh</FlatButton>
      <FlatButton $w={52}>Back</FlatButton>
      <FlatButton $w={67}>Forecast</FlatButton>
      <FlatButton $w={51}>Exit</FlatButton>
    </Legend>
  );
}

function BookingList() {
  return (
    <BookingPane>
      <Filters>
        <FilterGroup $w={328} $h={30} $size={14}>
          <Radio name="state" text="InHouse" w={75} checked />
          <Radio name="state" text="D/O" w={52} />
          <Radio name="state" text="Departured" w={91} />
          <Radio name="state" text="All" w={43} />
          <Radio name="state" text="C.Off" w={60} gap={9} bold />
        </FilterGroup>
        <FilterGroup $w={133} $h={28} $size={12}>
          <Radio name="kind" text="Individual" w={72} gap={0} checked />
          <Radio name="kind" text="Group" w={52} gap={4} />
        </FilterGroup>
      </Filters>
      <BookingTable>
        <colgroup>
          <col style={{ width: 78 }} />
          <col style={{ width: 148 }} />
          <col style={{ width: 75 }} />
          <col style={{ width: 69 }} />
          <col />
        </colgroup>
        <thead>
          <tr>
            <th>Type</th>
            <th><SortMark $edge>/</SortMark>BK-ID</th>
            <th>Room N<SortMark>/</SortMark></th>
            <th>Arr Dat<SortMark>/</SortMark></th>
            <th>Dept D<SortMark>/</SortMark></th>
          </tr>
        </thead>
        <tbody>
          <tr>
            <td>MAIN</td>
            <td>1000000413/1</td>
            <td>206</td>
            <td>29/09/23</td>
            <td>29/09/23</td>
          </tr>
        </tbody>
      </BookingTable>
      <RoomLine>
        <RoomButton $w={78} $bg="#b2b2b2">Room No.</RoomButton>
        <Combo label="Room" value="206" w={101} />
        <RoomButton $w={59} $bg={FACE}>BK-ID</RoomButton>
        <Combo label="Booking" value="" w={142} bg={FACE} />
        <Combo label="Company" value="" bg={FACE} />
      </RoomLine>
    </BookingPane>
  );
}

function ExtraFolios() {
  return (
    <FolioPane>
      <ExtraCaption>Folios List with "Create Extra Folios"</ExtraCaption>
      <ExtraTable>
        <colgroup>
          <col style={{ width: 50 }} />
          <col style={{ width: 75 }} />
          <col style={{ width: 114 }} />
          <col style={{ width: 49 }} />
          <col style={{ width: 92 }} />
          <col style={{ width: 64 }} />
          <col style={{ width: 73 }} />
          <col />
        </colgroup>
        <thead>
          <tr>
            <th colSpan={2}>Type</th>
            <th>BK-ID</th>
            <th>RmNo</th>
            <th>Folio</th>
            <th>Arr Date</th>
            <th>Dept Date</th>
            <th>Balance</th>
          </tr>
        </thead>
        <tbody>
          <tr>
            <td>1</td>
            <td>MAIN</td>
            <td>1000000413/1</td>
            <td>206</td>
            <td>1000000712</td>
            <td>29/09/23</td>
            <td>29/09/23</td>
            <td>0</td>
          </tr>
        </tbody>
      </ExtraTable>
      <CommentsBar>Comments/ Caompany/ Guest list</CommentsBar>
      <CommentsArea>
        <FolioPick>
          <FolioButton>Folios</FolioButton>
          <Combo label="Folio letter" value="A" w={64} h={24} />
          <Combo label="Folio type" value="" w={64} h={28} bg={FACE} />
        </FolioPick>
        <GuestList>
          <div />
          <div />
          <div>Mr/Ms.ALEX NGUYEN</div>
        </GuestList>
      </CommentsArea>
    </FolioPane>
  );
}

function FolioLedger() {
  return (
    <LedgerBox>
      <Ledger>
        <colgroup>
          <col style={{ width: 23 }} />
          <col style={{ width: 68 }} />
          <col style={{ width: 46 }} />
          <col />
          <col style={{ width: 124 }} />
          <col style={{ width: 88 }} />
          <col style={{ width: 68 }} />
        </colgroup>
        <thead>
          <tr>
            <th colSpan={2}>Date</th>
            <th>Folios</th>
            <th />
            <th>Total</th>
            <th>Share</th>
            <th>Amt.Dis</th>
          </tr>
        </thead>
        <tbody>
          {[true, false].map((active) => (
            <LedgerRow key={String(active)} $active={active}>
              <td>{active && <Marker />}</td>
              <td>29/09/23</td>
              <td>1</td>
              <td />
              <td>0.00</td>
              <td>0</td>
              <td>0</td>
            </LedgerRow>
          ))}
        </tbody>
      </Ledger>
      <HScroll>
        <HGrip />
        <ArrowButton $w={21} aria-label="Scroll left"><Chevron dir="left" /></ArrowButton>
        <HThumb />
        <ArrowButton $w={24} aria-label="Scroll right"><Chevron dir="right" /></ArrowButton>
      </HScroll>
    </LedgerBox>
  );
}

function Totals() {
  return (
    <SumLine>
      <SmallButton $w={59}>Sort</SmallButton>
      <SmallButton $w={56}>Type</SmallButton>
      <Combo label="Sort currency" value="VND" w={69} h={27} bg="#00ff7f" left classic />
      <span />
      <SumLabel $w={68} htmlFor="folio1">Folio 1:</SumLabel>
      <SumInput id="folio1" $grow={139} $bold defaultValue="0" />
      <SumLabel $w={67} htmlFor="folio2">Folio 2:</SumLabel>
      <SumInput id="folio2" $grow={115} defaultValue="0" />
      <SumLabel $w={67} htmlFor="folio3">Folio 3:</SumLabel>
      <SumInput id="folio3" $grow={120} defaultValue="0" />
      <SumLabel $w={79} htmlFor="balance">Balance:</SumLabel>
      <SumInput id="balance" $grow={134} defaultValue="0" />
    </SumLine>
  );
}

function Entry() {
  const heads = ["Bill No.", "Services Id", "Services Name", "Qty", "Rate", "Amount", "Currency"];
  return (
    <EntryGrid>
      {heads.map((h) => (
        <EntryHead key={h}>{h}</EntryHead>
      ))}
      <span />
      <UnMerge>UnMerge</UnMerge>
      <EntryInput aria-label="Bill No." />
      <Combo label="Services Id" value="" w={98} bg={FACE} />
      <EntryInput aria-label="Services Name" />
      <QtyBox>
        <input aria-label="Qty" defaultValue="1" />
        <Spin>
          <SpinButton aria-label="Increase"><Triangle dir="up" w={6} /></SpinButton>
          <SpinButton aria-label="Decrease"><Triangle w={6} /></SpinButton>
        </Spin>
      </QtyBox>
      <EntryInput aria-label="Rate" $bg="#fff" defaultValue={mask + "0"} />
      <EntryInput aria-label="Amount" defaultValue={mask + "0"} />
      <Combo label="Currency" value="" w={73} bg="#00ff7f" classic />
    </EntryGrid>
  );
}

function Settlement() {
  return (
    <SettleLine>
      <SettleButton>Settle:</SettleButton>
      <Combo label="Settle by" value="VOUCHER" bg="#ffc080" />
      <Combo label="Settle currency" value="VND" w={66} bg="#00ff7f" left classic />
      <SettleInput aria-label="Exchange rate" $w={87} $bg={FACE} defaultValue="24,125.00" />
      <span />
      <FeeLabel>
        <input type="checkbox" />
        Including bank fee
      </FeeLabel>
      <SettleInput aria-label="Amount paid" $w={149} defaultValue={mask + "0.00"} />
      <SettleInput aria-label="Difference" $w={61} $bg="#ff0000" $fg="#600" defaultValue="__0.00" />
      <SmallButton $w={86} $h={28} $size={15} $primary>Apply</SmallButton>
      <SmallButton $w={81} $h={28} $size={15}>Cancel</SmallButton>
    </SettleLine>
  );
}

function VoucherDialog() {
  return (
    <Dialog aria-label="Card No.">
      <DialogTitle>Card No. (Press ESC cancel)</DialogTitle>
      <DialogHeading htmlFor="voucher">VOUCHER NO.</DialogHeading>
      <CodeField>
        <input id="voucher" defaultValue="001" />
        <Caret />
      </CodeField>
      <FieldRow>
        <FieldLabel htmlFor="start">Start date:</FieldLabel>
        <FieldInput id="start" $align="center" $pad="0" defaultValue="23/08/2022" />
        <FieldLabel htmlFor="end">End date:</FieldLabel>
        <FieldInput id="end" $align="center" $pad="0" defaultValue="23/08/2023" />
      </FieldRow>
      <FieldRow>
        <FieldLabel htmlFor="type">Type</FieldLabel>
        <FieldInput id="type" defaultValue="Voucher 1 triệu" />
        <FieldLabel htmlFor="amount">Amount</FieldLabel>
        <FieldInput id="amount" $align="right" defaultValue="1,000,000" />
      </FieldRow>
      <FieldRow>
        <FieldLabel htmlFor="discount">Discount</FieldLabel>
        <FieldInput id="discount" defaultValue="None" />
      </FieldRow>
      <FieldRow $h={56}>
        <FieldLabel htmlFor="remarks">Remarks</FieldLabel>
        <FieldInput id="remarks" $h={56} $pad="0 7px 28px" defaultValue="1 triệu" />
      </FieldRow>
      <ApplyButton>Apply(F2)</ApplyButton>
    </Dialog>
  );
}

export default function App() {
  return (
    <Page>
      <GlobalStyle />
      <Frame>
        <Desk>
          <MenuBar>
            {menus.map((m) => (
              <MenuLink key={m} href="#">
                <u>{m[0]}</u>
                {m.slice(1)}
              </MenuLink>
            ))}
          </MenuBar>
          <ToolStrip>
            <Tools>
              {tools.map(([name, icon, w]) => (
                <Tool key={name} $w={w}>
                  <svg viewBox="0 0 20 20" aria-hidden="true">{icons[icon]}</svg>
                  {name}
                </Tool>
              ))}
            </Tools>
          </ToolStrip>
          <Rail />
          <RoomPlan />
          <BottomLists />
          <LegendBar />
          <StatusBar>
            <StatusCell $w={63}>Ready</StatusCell>
            <StatusCell $w={95}>GiHoTech</StatusCell>
            <StatusCell $w={190}>ADMIN/Administrator</StatusCell>
            <StatusCell $w={158}>29/09/2023 16:23</StatusCell>
            <StatusCell $w={159}>28/09/2023 08:12</StatusCell>
            <StatusCell $w={196}>DESKTOP-7N6RTGV</StatusCell>
            <StatusCell $w={55}>Login</StatusCell>
            <StatusCell $grow={481} $version>Version 01.07.2008.100</StatusCell>
            <StatusCell $grow={482} $left>Message</StatusCell>
          </StatusBar>

          <FolioWindow>
            <TitleBar>
              <svg width="18" height="18" viewBox="0 0 18 18" aria-hidden="true">
                <path d="M1 1h16v16H1z" fill="#e4e4e4" stroke="#bbb" />
                <path d="M8 1h9v9H8z" fill="#f4c41c" stroke="#a87c10" />
                <path d="M1 6h6v7H1z" fill="#c81e1e" stroke="#8a1010" />
                <path d="M8 11h7v5H8z" fill="#4c8cf0" stroke="#2a60b8" />
              </svg>
              <TitleText>
                UserId: ADMIN -Date: 29/09/2023 -Time: 16:23 -Location: DESKTOP-7N6RTGV (48)(F3 view from move all Booking
                to Group)- F4:Dr...
              </TitleText>
              <WindowButton aria-label="Minimize">
                <svg width="12" height="12"><path d="M0 5.500h12" stroke="#ccc" /></svg>
              </WindowButton>
              <WindowButton aria-label="Maximize">
                <svg width="12" height="12"><path d="M.5.5h11v11H.5z" fill="none" stroke="#777" /></svg>
              </WindowButton>
              <WindowButton aria-label="Close">
                <svg width="13" height="13"><path d="M.5.5l12 12M12.500.5l-12 12" stroke="#777" /></svg>
              </WindowButton>
            </TitleBar>
            <Upper>
              <BookingList />
              <ExtraFolios />
            </Upper>
            <Lower>
              <SideBar>
                {sideButtons.map((b) => (
                  <SideButton key={b.t} $h={b.h} $fg={b.fg} $bg={b.bg} $lh={b.lh}>
                    {b.t}
                  </SideButton>
                ))}
              </SideBar>
              <Work>
                <TabLine>
                  <Tab>Folio Detail</Tab>
                  <FolioTag $w={100} $bg="#80f080" />
                  <span />
                  <FolioTag $w={143} $bg="#ff8000">1000000712</FolioTag>
                  <FolioTag $w={77} $bg="#008000">MAIN</FolioTag>
                </TabLine>
                <FolioLedger />
                <Totals />
                <Entry />
                <Settlement />
              </Work>
            </Lower>
          </FolioWindow>

          <VoucherDialog />

          <Callout $x={1297} $y={477} $w={200}>Nhập số Voucher</Callout>
          <Badge $x={1277} $y={457}>1</Badge>
          <Callout $x={960} $y={760} $w={185}>Nhấn nút Apply</Callout>
          <Badge $x={1125} $y={740}>2</Badge>
          <Pointer viewBox="0 0 34 54" aria-hidden="true">
            <path d="M16 26l12 21" stroke="#fb0000" strokeWidth="6" strokeLinecap="round" />
            <path d="M1 1l30 18-30 17z" fill="#fb0000" />
          </Pointer>
        </Desk>
      </Frame>
    </Page>
  );
}
